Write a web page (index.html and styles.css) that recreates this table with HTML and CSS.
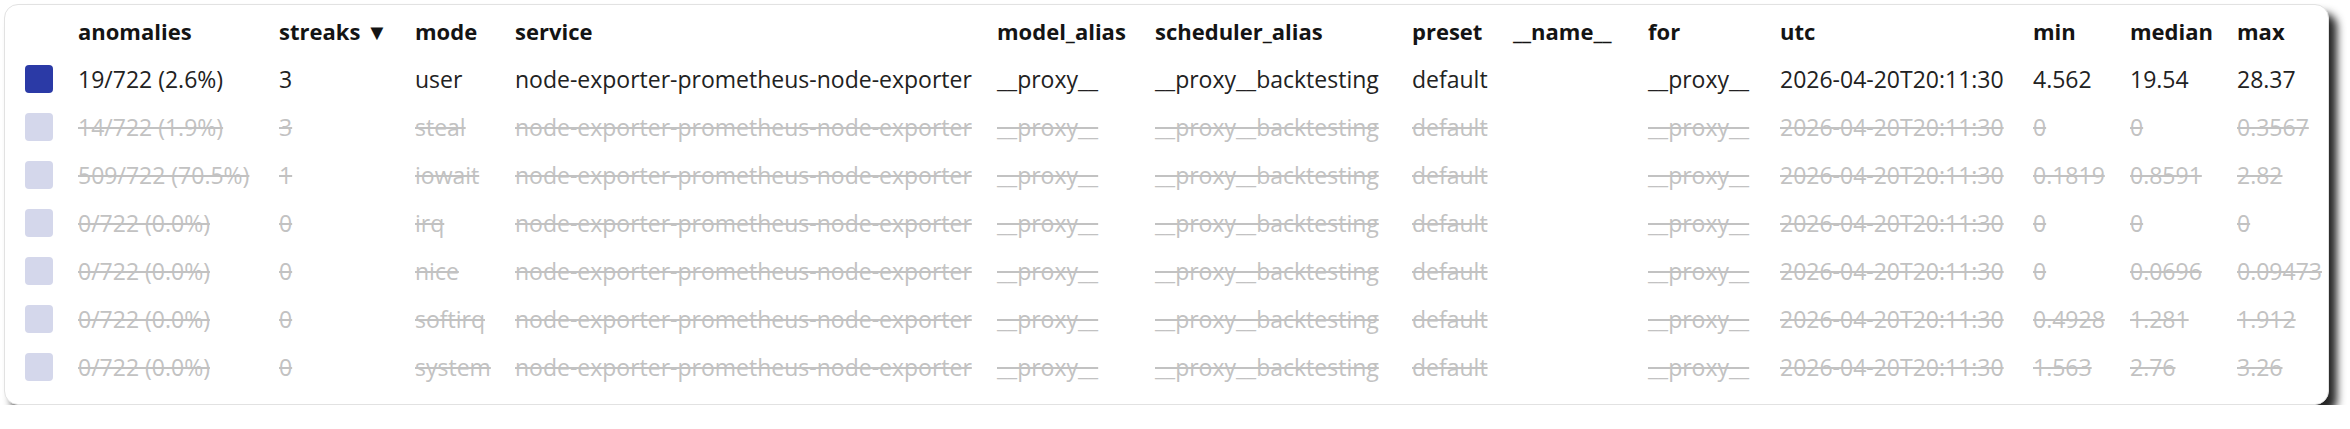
FILE: index.html
```html
<!DOCTYPE html>
<html>
<head>
<meta charset="utf-8">
<link rel="stylesheet" href="styles.css">
</head>
<body>
<div class="page">
  <div class="card">
    <table class="grid">
      <colgroup>
        <col class="c-sw"><col class="c-anom"><col class="c-streak"><col class="c-mode"><col class="c-svc"><col class="c-model"><col class="c-sched"><col class="c-preset"><col class="c-name"><col class="c-for"><col class="c-utc"><col class="c-min"><col class="c-med"><col class="c-max">
      </colgroup>
      <thead>
        <tr>
          <th></th><th>anomalies</th><th>streaks ▼</th><th>mode</th><th>service</th><th>model_alias</th><th>scheduler_alias</th><th>preset</th><th>__name__</th><th>for</th><th>utc</th><th>min</th><th>median</th><th>max</th>
        </tr>
      </thead>
      <tbody>
        <tr class="on">
          <td><span class="sw"></span></td><td>19/722 (2.6%)</td><td>3</td><td>user</td><td>node-exporter-prometheus-node-exporter</td><td>__proxy__</td><td>__proxy__backtesting</td><td>default</td><td></td><td>__proxy__</td><td>2026-04-20T20:11:30</td><td>4.562</td><td>19.54</td><td>28.37</td>
        </tr>
        <tr class="off">
          <td><span class="sw"></span></td><td><s>14/722 (1.9%)</s></td><td><s>3</s></td><td><s>steal</s></td><td><s>node-exporter-prometheus-node-exporter</s></td><td><s>__proxy__</s></td><td><s>__proxy__backtesting</s></td><td><s>default</s></td><td></td><td><s>__proxy__</s></td><td><s>2026-04-20T20:11:30</s></td><td><s>0</s></td><td><s>0</s></td><td><s>0.3567</s></td>
        </tr>
        <tr class="off">
          <td><span class="sw"></span></td><td><s>509/722 (70.5%)</s></td><td><s>1</s></td><td><s>iowait</s></td><td><s>node-exporter-prometheus-node-exporter</s></td><td><s>__proxy__</s></td><td><s>__proxy__backtesting</s></td><td><s>default</s></td><td></td><td><s>__proxy__</s></td><td><s>2026-04-20T20:11:30</s></td><td><s>0.1819</s></td><td><s>0.8591</s></td><td><s>2.82</s></td>
        </tr>
        <tr class="off">
          <td><span class="sw"></span></td><td><s>0/722 (0.0%)</s></td><td><s>0</s></td><td><s>irq</s></td><td><s>node-exporter-prometheus-node-exporter</s></td><td><s>__proxy__</s></td><td><s>__proxy__backtesting</s></td><td><s>default</s></td><td></td><td><s>__proxy__</s></td><td><s>2026-04-20T20:11:30</s></td><td><s>0</s></td><td><s>0</s></td><td><s>0</s></td>
        </tr>
        <tr class="off">
          <td><span class="sw"></span></td><td><s>0/722 (0.0%)</s></td><td><s>0</s></td><td><s>nice</s></td><td><s>node-exporter-prometheus-node-exporter</s></td><td><s>__proxy__</s></td><td><s>__proxy__backtesting</s></td><td><s>default</s></td><td></td><td><s>__proxy__</s></td><td><s>2026-04-20T20:11:30</s></td><td><s>0</s></td><td><s>0.0696</s></td><td><s>0.09473</s></td>
        </tr>
        <tr class="off">
          <td><span class="sw"></span></td><td><s>0/722 (0.0%)</s></td><td><s>0</s></td><td><s>softirq</s></td><td><s>node-exporter-prometheus-node-exporter</s></td><td><s>__proxy__</s></td><td><s>__proxy__backtesting</s></td><td><s>default</s></td><td></td><td><s>__proxy__</s></td><td><s>2026-04-20T20:11:30</s></td><td><s>0.4928</s></td><td><s>1.281</s></td><td><s>1.912</s></td>
        </tr>
        <tr class="off">
          <td><span class="sw"></span></td><td><s>0/722 (0.0%)</s></td><td><s>0</s></td><td><s>system</s></td><td><s>node-exporter-prometheus-node-exporter</s></td><td><s>__proxy__</s></td><td><s>__proxy__backtesting</s></td><td><s>default</s></td><td></td><td><s>__proxy__</s></td><td><s>2026-04-20T20:11:30</s></td><td><s>1.563</s></td><td><s>2.76</s></td><td><s>3.26</s></td>
        </tr>
      </tbody>
    </table>
  </div>
</div>
</body>
</html>
```

FILE: styles.css
```css
html, body {
  margin: 0;
  padding: 0;
  background: #ffffff;
}

.page {
  padding: 4px 0 0 4px;
}

.card {
  width: 2325px;
  height: 401px;
  box-sizing: border-box;
  background: #ffffff;
  border: 1px solid #e2e2e2;
  border-radius: 14px;
  box-shadow: 8px 9px 9px rgba(0, 0, 0, 0.85);
  padding: 2px 0 0 20px;
  font-family: "Open Sans", "Noto Sans", sans-serif;
  font-size: 23px;
  color: #222222;
}

.grid {
  border-collapse: collapse;
  table-layout: fixed;
  width: 2303px;
}

.c-sw { width: 53px; }
.c-anom { width: 201px; }
.c-streak { width: 136px; }
.c-mode { width: 100px; }
.c-svc { width: 482px; }
.c-model { width: 158px; }
.c-sched { width: 257px; }
.c-preset { width: 101px; }
.c-name { width: 135px; }
.c-for { width: 132px; }
.c-utc { width: 253px; }
.c-min { width: 97px; }
.c-med { width: 107px; }
.c-max { width: 91px; }

.grid th,
.grid td {
  height: 48px;
  padding: 0;
  text-align: left;
  vertical-align: middle;
  white-space: nowrap;
}

.grid th {
  font-size: 22px;
  font-weight: 700;
  color: #141414;
}

.sw {
  display: block;
  width: 28px;
  height: 28px;
  border-radius: 4px;
}

.on .sw {
  background: #2b3aa6;
}

.off .sw {
  background: #d4d7eb;
}

.off td {
  color: #c2c2c2;
}

.off s {
  text-decoration: line-through;
  text-decoration-thickness: 2px;
}
```
